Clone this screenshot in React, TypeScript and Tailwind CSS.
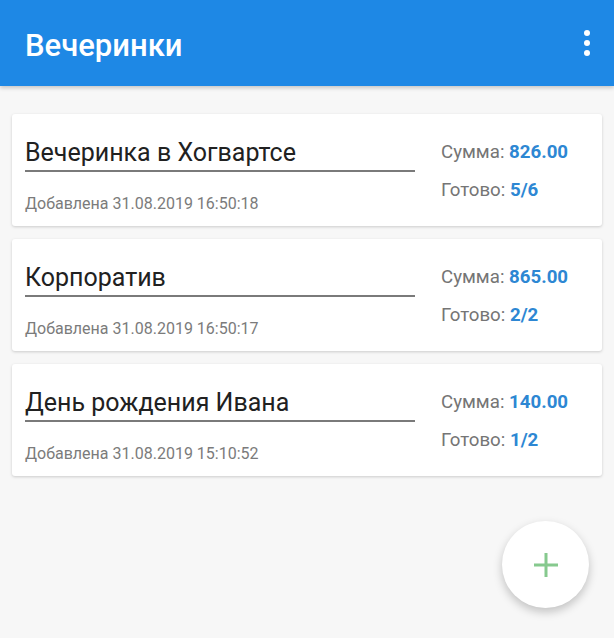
const parties = [
  { title: 'Вечеринка в Хогвартсе', added: '31.08.2019 16:50:18', sum: '826.00', done: '5/6' },
  { title: 'Корпоратив', added: '31.08.2019 16:50:17', sum: '865.00', done: '2/2' },
  { title: 'День рождения Ивана', added: '31.08.2019 15:10:52', sum: '140.00', done: '1/2' },
];

export default function App() {
  return (
    <div className="relative h-[638px] w-[614px] overflow-hidden bg-[#f7f7f7] font-['Roboto',sans-serif]">
      {/* Toolbar */}
      <div className="flex h-[86px] items-center justify-between bg-[#1e88e5] pl-[25px] pr-[24px] shadow-[0_2px_4px_rgba(0,0,0,0.2)]">
        <h1 className="pt-[5px] text-[31px] font-medium leading-[36px] text-white">Вечеринки</h1>
        <div className="flex flex-col items-center gap-[4px]">
          <span className="h-[6px] w-[6px] rounded-full bg-white" />
          <span className="h-[6px] w-[6px] rounded-full bg-white" />
          <span className="h-[6px] w-[6px] rounded-full bg-white" />
        </div>
      </div>

      {/* List */}
      <div className="flex flex-col gap-[13px] px-[12px] pt-[28px]">
        {parties.map((p) => (
          <div
            key={p.title}
            className="flex h-[112px] items-center rounded-[3px] bg-white pl-[13px] shadow-[0_1px_3px_rgba(0,0,0,0.18)]"
          >
            <div className="w-[390px]">
              <div className="border-b-2 border-[#7a7a7a] pb-[2px] pt-[11px] text-[25px] leading-[30px] text-[#212121]">
                {p.title}
              </div>
              <div className="mt-[23px] text-[16px] leading-[18px] text-[#7b7b7b]">Добавлена {p.added}</div>
            </div>
            <div className="ml-[26px] flex flex-col gap-[15px] pt-[3px] text-[18.7px] leading-[23px] text-[#757575]">
              <div>
                Сумма: <span className="font-bold text-[#2d87d3]">{p.sum}</span>
              </div>
              <div>
                Готово: <span className="font-bold text-[#2d87d3]">{p.done}</span>
              </div>
            </div>
          </div>
        ))}
      </div>

      {/* FAB */}
      <button className="absolute left-[502px] top-[521px] flex h-[87px] w-[87px] items-center justify-center rounded-full bg-white shadow-[0_4px_10px_rgba(0,0,0,0.22)]">
        <svg width="26" height="26" viewBox="0 0 26 26">
          <path d="M13 1v24M1 13h24" stroke="#86c98e" strokeWidth="3" />
        </svg>
      </button>
    </div>
  );
}
